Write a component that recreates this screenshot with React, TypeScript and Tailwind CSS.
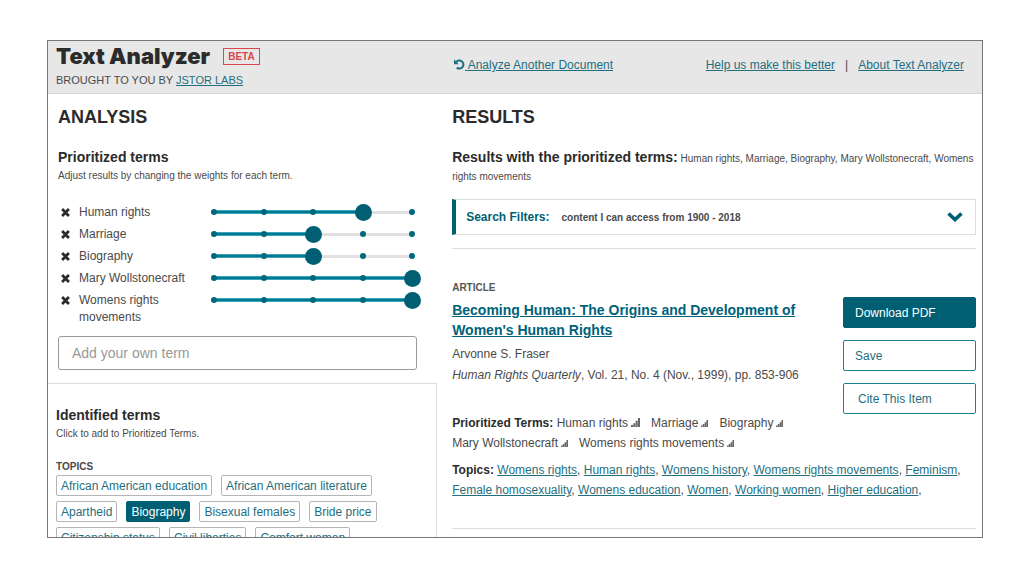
import { useState } from "react";

const topics = [
  "African American education",
  "African American literature",
  "Apartheid",
  "Biography",
  "Bisexual females",
  "Bride price",
  "Citizenship status",
  "Civil liberties",
  "Comfort women",
];

const articleTopics = [
  "Womens rights",
  "Human rights",
  "Womens history",
  "Womens rights movements",
  "Feminism",
  "Female homosexuality",
  "Womens education",
  "Women",
  "Working women",
  "Higher education",
];

const articleTerms = [
  { name: "Human rights", large: true },
  { name: "Marriage", large: false },
  { name: "Biography", large: false },
  { name: "Mary Wollstonecraft", large: false },
  { name: "Womens rights movements", large: false },
];

const linkClass = "text-[#1f6f80] underline";

function BarsIcon({ large }: { large: boolean }) {
  return (
    <svg
      viewBox="0 0 9 9"
      className={
        large
          ? "ml-[3px] inline size-[9px] align-baseline"
          : "ml-[3px] inline size-[7px] align-baseline"
      }
      fill="#666"
      aria-hidden="true"
    >
      <path d="M0 7h2v2H0zM2.3 5.2h2V9h-2zM4.7 2.8h2V9h-2zM7 0h2v9H7z" />
    </svg>
  );
}

function WeightSlider({
  name,
  value,
  onChange,
}: {
  name: string;
  value: number;
  onChange: (value: number) => void;
}) {
  return (
    <div className="relative mx-[5px] h-[17px] flex-1">
      <div className="absolute inset-x-0 top-[7px] h-[3px] bg-[#e1e1e1]" />
      <div
        className="absolute left-0 top-[6px] h-1 border-y border-[#3aa5bb] bg-[#007a92]"
        style={{ width: `${value * 25}%` }}
      />
      {[0, 1, 2, 3, 4].map((step) => (
        <span
          key={step}
          className="absolute top-[5px] -ml-[3px] size-[6px] rounded-full bg-[#00687d]"
          style={{ left: `${step * 25}%` }}
        />
      ))}
      <span
        className="absolute top-0 -ml-[8px] size-[17px] rounded-full bg-[#005f73]"
        style={{ left: `${value * 25}%` }}
      />
      <input
        type="range"
        min={0}
        max={4}
        value={value}
        aria-label={`Weight for ${name}`}
        onChange={(e) => onChange(Number(e.target.value))}
        className="absolute inset-0 m-0 w-full cursor-pointer opacity-0"
      />
    </div>
  );
}

function AnalysisPanel() {
  const [terms, setTerms] = useState([
    { name: "Human rights", weight: 3 },
    { name: "Marriage", weight: 2 },
    { name: "Biography", weight: 2 },
    { name: "Mary Wollstonecraft", weight: 4 },
    { name: "Womens rights movements", weight: 4 },
  ]);

  return (
    <section className="flex w-5/12 shrink-0 flex-col">
      <div className="pl-[10px] pr-5 pt-[11px]">
        <h2 className="text-[18px] font-bold leading-6 text-[#2b2b2b]">ANALYSIS</h2>
        <h3 className="mt-[19px] text-[14px] font-bold leading-[18px] text-[#2b2b2b]">
          Prioritized terms
        </h3>
        <p className="mt-[3px] text-[10px] leading-[14px]">
          Adjust results by changing the weights for each term.
        </p>

        <ul className="mt-[21px] flex flex-col gap-[5px]">
          {terms.map((term) => (
            <li key={term.name} className="flex items-start text-[12px] leading-[17px]">
              <button
                type="button"
                aria-label={`Remove ${term.name}`}
                onClick={() => setTerms(terms.filter((t) => t !== term))}
                className="flex h-[17px] w-[21px] shrink-0 items-center pl-[3px]"
              >
                <svg viewBox="0 0 9 9" className="size-[9px]" stroke="#2b2b2b" strokeWidth="2.8">
                  <path d="M1.1 1.1l6.8 6.8M7.9 1.1L1.1 7.9" />
                </svg>
              </button>
              <span className="w-[130px] shrink-0 pr-4">{term.name}</span>
              <WeightSlider
                name={term.name}
                value={term.weight}
                onChange={(weight) =>
                  setTerms(terms.map((t) => (t === term ? { ...t, weight } : t)))
                }
              />
            </li>
          ))}
        </ul>

        <input
          type="text"
          aria-label="Add your own term"
          placeholder="Add your own term"
          className="mt-[10px] h-[34px] w-full rounded-[3px] border border-[#999] px-[13px] text-[14px] placeholder-[#999] outline-none"
        />
      </div>

      <div className="mt-[13px] flex-1 border-r border-t border-[#ddd] pl-2 pt-[22px]">
        <h3 className="text-[14px] font-bold leading-[18px] text-[#2b2b2b]">
          Identified terms
        </h3>
        <p className="mt-[3px] text-[10px] leading-[14px]">Click to add to Prioritized Terms.</p>
        <h4 className="mt-[19px] text-[10px] font-bold leading-[14px]">TOPICS</h4>
        <div className="mt-[1px] flex w-[340px] flex-wrap gap-x-[9px] gap-y-[5px]">
          {topics.map((topic) => (
            <button
              key={topic}
              type="button"
              className={
                terms.some((t) => t.name === topic)
                  ? "h-[21px] rounded-[2px] border border-[#005f73] bg-[#005f73] px-1 text-[12px] leading-[18px] text-white"
                  : "h-[21px] rounded-[2px] border border-[#b5b5b5] px-1 text-[12px] leading-[18px] text-[#1f6f80]"
              }
            >
              {topic}
            </button>
          ))}
        </div>
      </div>
    </section>
  );
}

function ResultsPanel() {
  return (
    <section className="min-w-0 flex-1 pl-[15px] pr-[6px] pt-[11px]">
      <h2 className="text-[18px] font-bold leading-6 text-[#2b2b2b]">RESULTS</h2>
      <p className="mt-[19px] text-[10px] leading-[18px]">
        <strong className="text-[14px] text-[#2b2b2b]">
          Results with the prioritized terms:
        </strong>{" "}
        Human rights, Marriage, Biography, Mary Wollstonecraft, Womens rights movements
      </p>

      <button
        type="button"
        className="mt-[13px] flex h-9 w-full items-center border border-l-4 border-[#ddd] border-l-[#005f73] pl-[10px] pr-3 text-left"
      >
        <strong className="text-[12px] text-[#005f73]">Search Filters:</strong>
        <strong className="ml-3 flex-1 text-[10px]">content I can access from 1900 - 2018</strong>
        <svg viewBox="0 0 16 10" className="h-[10px] w-4" fill="none" stroke="#005f73" strokeWidth="3.6">
          <path d="M1.5 1.5L8 7.6l6.5-6.1" />
        </svg>
      </button>

      <article className="mt-[13px] border-y border-[#ddd] pb-[28px] pt-[32px]">
        <h4 className="text-[10px] font-bold leading-[14px] text-[#555]">ARTICLE</h4>
        <div className="flex justify-between">
          <div className="w-[350px] pt-[5px]">
            <h3 className="text-[14px] font-bold leading-5">
              <a href="#article" className="text-[#00627a] underline">
                Becoming Human: The Origins and Development of Women's Human Rights
              </a>
            </h3>
            <p className="mt-[4px] text-[12px] leading-[21px]">Arvonne S. Fraser</p>
            <p className="text-[12px] leading-5">
              <em>Human Rights Quarterly</em>, Vol. 21, No. 4 (Nov., 1999), pp. 853-906
            </p>
            <p className="mt-[28px] text-[12px] leading-5">
              <strong className="text-[#2b2b2b]">Prioritized Terms:</strong>{" "}
              {articleTerms.map((term) => (
                <span key={term.name} className="mr-[11px] inline-block">
                  {term.name}
                  <BarsIcon large={term.large} />
                </span>
              ))}
            </p>
          </div>
          <div className="mt-[2px] flex w-[133px] flex-col gap-3">
            <button type="button" className="h-[31px] rounded-[2px] border border-[#005f73] bg-[#005f73] px-[11px] text-left text-[12px] text-white">
              Download PDF
            </button>
            <button type="button" className="h-[31px] rounded-[2px] border border-[#1f7f92] px-[11px] text-left text-[12px] text-[#1f6f80]">
              Save
            </button>
            <button type="button" className="h-[31px] rounded-[2px] border border-[#1f7f92] px-[14px] text-left text-[12px] text-[#1f6f80]">
              Cite This Item
            </button>
          </div>
        </div>
        <p className="mt-[7px] text-[12px] leading-5">
          <strong className="text-[#2b2b2b]">Topics:</strong>{" "}
          {articleTopics.map((topic) => (
            <span key={topic}>
              <a href="#topic" className={linkClass}>
                {topic}
              </a>
              ,{" "}
            </span>
          ))}
        </p>
      </article>
    </section>
  );
}

export default function App() {
  return (
    <div className="h-screen bg-white pb-[38px] pl-[47px] pr-[41px] pt-10 font-['Liberation_Sans',Arial,sans-serif] text-[#4a4a4a]">
      <div className="flex h-full flex-col overflow-hidden border border-[#777]">
        <header className="flex shrink-0 border-b border-[#d5d5d5] bg-[#e7e7e7] pb-[5px] text-[12px]">
          <div className="w-[406px] pl-2">
            <div className="flex items-center gap-[13px]">
              <h1 className="font-['Inter',sans-serif] text-[22px] font-black leading-[30px] text-[#2b2b2b]">
                Text Analyzer
              </h1>
              <span className="border border-[#d9474f] px-1 text-[10px] font-bold leading-[15px] text-[#d9474f]">
                BETA
              </span>
            </div>
            <p className="mt-[1px] text-[11px] leading-4">
              BROUGHT TO YOU BY{" "}
              <a href="#labs" className={linkClass}>
                JSTOR LABS
              </a>
            </p>
          </div>
          <div className="flex flex-1 items-start justify-between pr-[18px] pt-4 leading-[17px]">
            <a href="#upload" className={linkClass}>
              <svg viewBox="0 0 12 12" className="inline size-[11px] align-[-1px]" fill="none" stroke="#1f6f80" strokeWidth="2.2">
                <path d="M2.4 3.4A4.4 4.4 0 1 1 3 9.4" />
                <path d="M0 .4v5.2h5.2z" fill="#1f6f80" stroke="none" />
              </svg>{" "}
              Analyze Another Document
            </a>
            <nav className="flex gap-[10px]">
              <a href="#feedback" className={linkClass}>
                Help us make this better
              </a>
              <span>|</span>
              <a href="#about" className={linkClass}>
                About Text Analyzer
              </a>
            </nav>
          </div>
        </header>

        <main className="flex min-h-0 flex-1">
          <AnalysisPanel />
          <ResultsPanel />
        </main>
      </div>
    </div>
  );
}
